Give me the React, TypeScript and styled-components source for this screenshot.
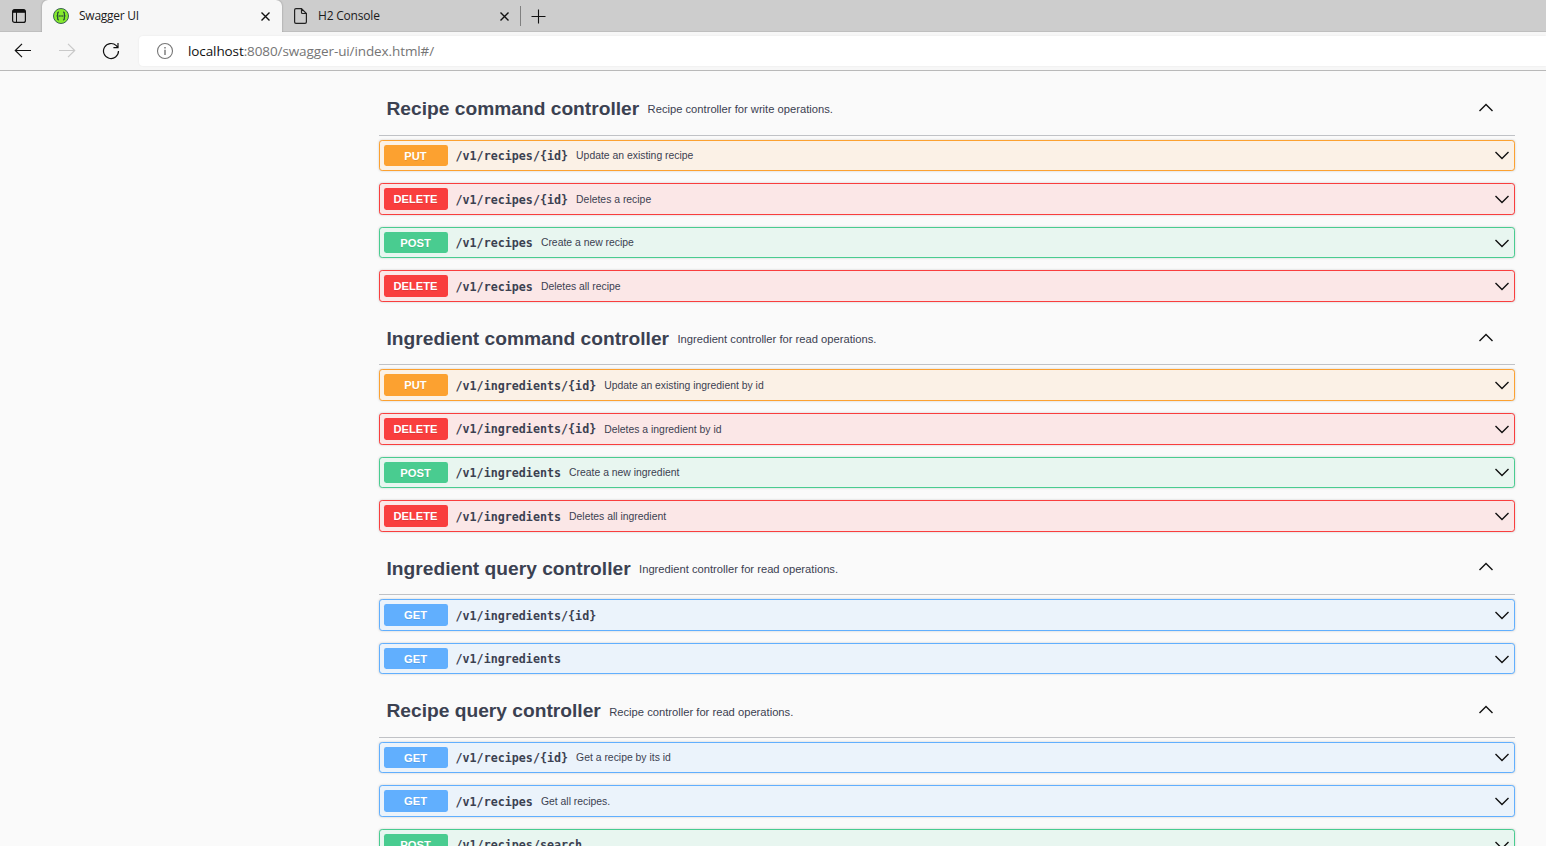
import React from "react";
import styled, { createGlobalStyle } from "styled-components";

const Global = createGlobalStyle`
  * { box-sizing: border-box; }
  html, body { margin: 0; padding: 0; }
  body {
    height: 846px;
    overflow: hidden;
    background: #fafafa;
    color: #3b4151;
    font-family: "Liberation Sans", Arial, sans-serif;
  }
  svg { display: block; flex: none; }
`;

const methodColors = {
  PUT: { main: "#fca130", tint: "#fbf1e6" },
  DELETE: { main: "#f93e3e", tint: "#fbe7e7" },
  POST: { main: "#49cc90", tint: "#e8f6f0" },
  GET: { main: "#61affe", tint: "#ebf3fb" },
};
type Method = keyof typeof methodColors;

const Window = styled.div`
  display: flex;
  flex-direction: column;
  height: 846px;
  overflow: hidden;
`;

const TabStrip = styled.div`
  display: flex;
  height: 32px;
  background: #cdcdcd;
  box-shadow: inset 0 -1px 0 #bfbfbf;
  font: 12px/32px "Open Sans", "Segoe UI", sans-serif;
  color: #1b1b1b;
`;

const TabActions = styled.div`
  width: 42px;
  padding: 9px 0 0 12px;
`;

const Tab = styled.div<{ $active?: boolean }>`
  display: flex;
  align-items: center;
  width: ${(p) => (p.$active ? 240 : 238)}px;
  height: 32px;
  padding: 0 ${(p) => (p.$active ? 11 : 10)}px 0 ${(p) => (p.$active ? 11 : 12)}px;
  background: ${(p) => (p.$active ? "#f7f7f7" : "transparent")};
  border-radius: 6px 6px 0 0;
  box-shadow: ${(p) => (p.$active ? "0 0 2px rgba(0,0,0,.35)" : "none")};
  clip-path: ${(p) => (p.$active ? "inset(0 -3px 0 -3px)" : "none")};
`;

const TabTitle = styled.span<{ $gap: number; $track: number }>`
  flex: 1;
  padding-left: ${(p) => p.$gap}px;
  letter-spacing: ${(p) => p.$track}px;
  white-space: nowrap;
`;

const NewTab = styled.div`
  display: flex;
  align-items: center;
  height: 20px;
  margin-top: 6px;
  padding-left: 10px;
  border-left: 1px solid #808080;
`;

const Toolbar = styled.div`
  display: flex;
  align-items: center;
  height: 39px;
  padding-left: 14px;
  background: #f7f7f7;
  border-bottom: 1px solid #b9b9b9;
`;

const NavButtons = styled.div`
  display: flex;
  gap: 26px;
  width: 125px;
`;

const AddressBar = styled.div`
  display: flex;
  flex: 1;
  align-items: center;
  height: 30px;
  padding-left: 17px;
  background: #fff;
  border-radius: 4px 0 0 4px;
  box-shadow: 0 0 2px rgba(0, 0, 0, 0.08);
`;

const Url = styled.span`
  padding-left: 14px;
  font: 13.5px/30px "Open Sans", "Segoe UI", sans-serif;
  letter-spacing: -0.1px;
  color: #757575;
`;

const Host = styled.span`
  color: #111;
`;

const Page = styled.main`
  flex: 1;
  min-height: 0;
  overflow: hidden;
  padding: 13.2px 31px 0 379px;
`;

const SectionHeader = styled.header`
  display: flex;
  align-items: center;
  height: 51.4px;
  margin-bottom: 4px;
  padding: 0 21px 3px 7.5px;
  border-bottom: 1px solid rgba(59, 65, 81, 0.3);
`;

const SectionTitle = styled.h3`
  margin: 0;
  padding-top: 2.2px;
  font-size: 19.2px;
  line-height: 24px;
  font-weight: 700;
`;

const SectionNote = styled.small`
  flex: 1;
  padding: 3.2px 8px 0 8.4px;
  font-size: 11.2px;
  line-height: 16px;
`;

const Operation = styled.div<{ $method: Method }>`
  display: flex;
  align-items: center;
  height: 31.6px;
  margin-bottom: 12px;
  padding: 0 4px;
  background: ${(p) => methodColors[p.$method].tint};
  border: 1px solid ${(p) => methodColors[p.$method].main};
  border-radius: 3.2px;
  box-shadow: 0 0 2.4px rgba(0, 0, 0, 0.19);
`;

const MethodBadge = styled.span<{ $method: Method }>`
  width: 64px;
  height: 21.6px;
  padding-right: 1px;
  background: ${(p) => methodColors[p.$method].main};
  border-radius: 2.4px;
  color: #fff;
  font-size: 11.2px;
  font-weight: 700;
  line-height: 22.4px;
  text-align: center;
  text-shadow: 0 1px 0 rgba(0, 0, 0, 0.1);
`;

const Path = styled.span`
  padding: 1.2px 8px 0 7.5px;
  font: 600 11.7px/16px "DejaVu Sans Mono", monospace;
`;

const Summary = styled.span`
  flex: 1;
  padding-top: 1.6px;
  font-size: 10.4px;
  line-height: 14px;
`;

const Chevron = ({ up }: { up?: boolean }) => (
  <svg width="16" height="16" viewBox="0 0 16 16" fill="none" stroke="#111" strokeWidth="1.4">
    <path d={up ? "M1.5 11 8 4.5 14.5 11" : "M1.5 5 8 11.5 14.5 5"} />
  </svg>
);

const Close = () => (
  <svg width="11" height="11" viewBox="0 0 11 11" stroke="#111" strokeWidth="1.4">
    <path d="M1.5 1.5 9.5 9.5M9.5 1.5 1.5 9.5" />
  </svg>
);

const PanelIcon = () => (
  <svg width="14" height="14" viewBox="0 0 14 14" fill="none" stroke="#111">
    <rect x=".6" y=".6" width="12.8" height="12.8" rx="2" strokeWidth="1.2" />
    <path d="M1 2.3H13" strokeWidth="3" />
    <path d="M4.5 3V13" />
  </svg>
);

const SwaggerIcon = () => (
  <svg width="16" height="16" viewBox="0 0 16 16" fill="none">
    <circle cx="8" cy="8" r="7.5" fill="#85ea2d" stroke="#3c6255" />
    <path
      d="M6 4C4.6 4 4.7 4.8 4.7 6S4.6 8 3.6 8C4.6 8 4.7 8.8 4.7 10S4.6 12 6 12M10 4C11.4 4 11.3 4.8 11.3 6S11.4 8 12.4 8C11.4 8 11.3 8.8 11.3 10S11.4 12 10 12"
      stroke="#22443a"
      strokeWidth="1.2"
    />
    <path d="M5.6 8H10.5" stroke="#22443a" strokeWidth="1.3" strokeDasharray="1.2 .6" />
  </svg>
);

const FileIcon = () => (
  <svg width="13" height="16" viewBox="0 0 13 16" fill="none" stroke="#222" strokeWidth="1.2">
    <path d="M2 .6H7.5L12.4 5.5V14Q12.4 15.4 11 15.4H2Q.6 15.4 .6 14V2Q.6 .6 2 .6ZM7.5 .6V4.5Q7.5 5.5 8.5 5.5H12.4" />
  </svg>
);

const PlusIcon = () => (
  <svg width="15" height="15" viewBox="0 0 15 15" stroke="#111" strokeWidth="1.1">
    <path d="M.5 7.5H14.5M7.5 .5V14.5" />
  </svg>
);

const ArrowIcon = ({ forward }: { forward?: boolean }) => (
  <svg width="18" height="18" viewBox="0 0 18 18" fill="none" stroke={forward ? "#c9c9c9" : "#111"} strokeWidth="1.2">
    <path d={forward ? "M1 8.5H16.5M10 1.8 16.7 8.5 10 15.2" : "M17 8.5H1.5M8 1.8 1.3 8.5 8 15.2"} />
  </svg>
);

const ReloadIcon = () => (
  <svg width="18" height="18" viewBox="0 0 18 18" fill="none" stroke="#111" strokeWidth="1.2">
    <path d="M16.5 9A7.5 7.5 0 1 1 14.3 3.7L15.8 5.3M16 1V5.6H11.4" />
  </svg>
);

const InfoIcon = () => (
  <svg width="18" height="18" viewBox="0 0 18 18" fill="none" stroke="#767676">
    <circle cx="9" cy="9" r="7.5" strokeWidth="1.1" />
    <path d="M9 7.8V13M9 5V6.5" strokeWidth="1.4" />
  </svg>
);

interface Op {
  method: Method;
  path: string;
  summary?: string;
}

const sections: { title: string; note: string; ops: Op[] }[] = [
  {
    title: "Recipe command controller",
    note: "Recipe controller for write operations.",
    ops: [
      { method: "PUT", path: "/v1/recipes/{id}", summary: "Update an existing recipe" },
      { method: "DELETE", path: "/v1/recipes/{id}", summary: "Deletes a recipe" },
      { method: "POST", path: "/v1/recipes", summary: "Create a new recipe" },
      { method: "DELETE", path: "/v1/recipes", summary: "Deletes all recipe" },
    ],
  },
  {
    title: "Ingredient command controller",
    note: "Ingredient controller for read operations.",
    ops: [
      { method: "PUT", path: "/v1/ingredients/{id}", summary: "Update an existing ingredient by id" },
      { method: "DELETE", path: "/v1/ingredients/{id}", summary: "Deletes a ingredient by id" },
      { method: "POST", path: "/v1/ingredients", summary: "Create a new ingredient" },
      { method: "DELETE", path: "/v1/ingredients", summary: "Deletes all ingredient" },
    ],
  },
  {
    title: "Ingredient query controller",
    note: "Ingredient controller for read operations.",
    ops: [
      { method: "GET", path: "/v1/ingredients/{id}" },
      { method: "GET", path: "/v1/ingredients" },
    ],
  },
  {
    title: "Recipe query controller",
    note: "Recipe controller for read operations.",
    ops: [
      { method: "GET", path: "/v1/recipes/{id}", summary: "Get a recipe by its id" },
      { method: "GET", path: "/v1/recipes", summary: "Get all recipes." },
      { method: "POST", path: "/v1/recipes/search" },
    ],
  },
];

export default function App() {
  return (
    <Window>
      <Global />
      <TabStrip>
        <TabActions>
          <PanelIcon />
        </TabActions>
        <Tab $active>
          <SwaggerIcon />
          <TabTitle $gap={10} $track={-0.25}>Swagger UI</TabTitle>
          <Close />
        </Tab>
        <Tab>
          <FileIcon />
          <TabTitle $gap={11} $track={-0.2}>H2 Console</TabTitle>
          <Close />
        </Tab>
        <NewTab>
          <PlusIcon />
        </NewTab>
      </TabStrip>
      <Toolbar>
        <NavButtons>
          <ArrowIcon />
          <ArrowIcon forward />
          <ReloadIcon />
        </NavButtons>
        <AddressBar>
          <InfoIcon />
          <Url>
            <Host>localhost</Host>:8080/swagger-ui/index.html#/
          </Url>
        </AddressBar>
      </Toolbar>
      <Page>
        {sections.map((section) => (
          <section key={section.title}>
            <SectionHeader>
              <SectionTitle>{section.title}</SectionTitle>
              <SectionNote>{section.note}</SectionNote>
              <Chevron up />
            </SectionHeader>
            {section.ops.map((op) => (
              <Operation key={op.method + op.path} $method={op.method}>
                <MethodBadge $method={op.method}>{op.method}</MethodBadge>
                <Path>{op.path}</Path>
                <Summary>{op.summary}</Summary>
                <Chevron />
              </Operation>
            ))}
          </section>
        ))}
      </Page>
    </Window>
  );
}
